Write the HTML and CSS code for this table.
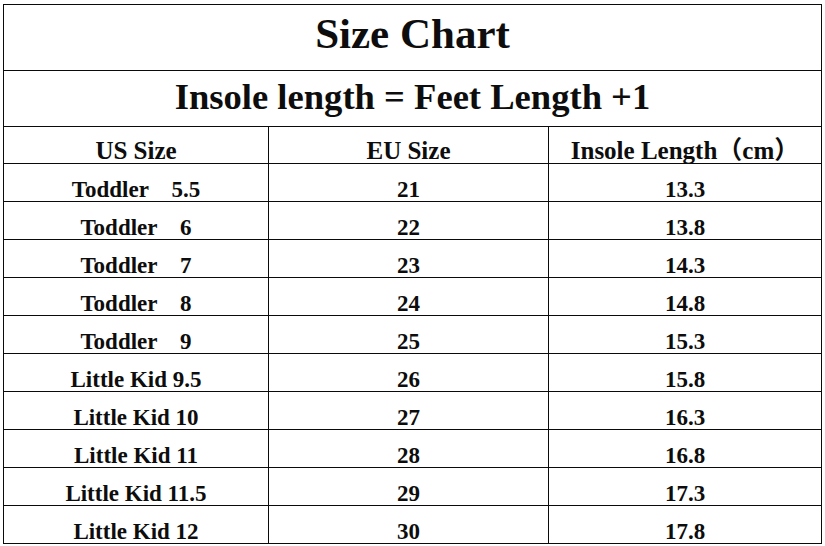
FILE: index.html
```html
<!DOCTYPE html>
<html>
<head>
<meta charset="utf-8">
<link rel="stylesheet" href="styles.css">
</head>
<body>
<div class="page">
  <div class="chart">
    <div class="cell span title">Size Chart</div>
    <div class="cell span formula">Insole length = Feet Length +1</div>
    <div class="cell head">US Size</div>
    <div class="cell head">EU Size</div>
    <div class="cell head">Insole Length（cm）</div>

    <div class="cell">Toddler    5.5</div><div class="cell">21</div><div class="cell">13.3</div>
    <div class="cell">Toddler    6</div><div class="cell">22</div><div class="cell">13.8</div>
    <div class="cell">Toddler    7</div><div class="cell">23</div><div class="cell">14.3</div>
    <div class="cell">Toddler    8</div><div class="cell">24</div><div class="cell">14.8</div>
    <div class="cell">Toddler    9</div><div class="cell">25</div><div class="cell">15.3</div>
    <div class="cell">Little Kid 9.5</div><div class="cell">26</div><div class="cell">15.8</div>
    <div class="cell">Little Kid 10</div><div class="cell">27</div><div class="cell">16.3</div>
    <div class="cell">Little Kid 11</div><div class="cell">28</div><div class="cell">16.8</div>
    <div class="cell">Little Kid 11.5</div><div class="cell">29</div><div class="cell">17.3</div>
    <div class="cell">Little Kid 12</div><div class="cell">30</div><div class="cell">17.8</div>
  </div>
</div>
</body>
</html>
```

FILE: styles.css
```css
html, body {
  margin: 0;
  padding: 0;
  background: #fff;
}

.page {
  padding: 4px 0 0 3px;
  height: 546px;
  box-sizing: border-box;
  overflow: hidden;
}

.chart {
  display: grid;
  grid-template-columns: 264px 279px 272px;
  grid-template-rows: 65px 55px 36px repeat(10, 37px);
  gap: 1px;
  padding: 1px;
  background: #0a0a0a;
  width: max-content;
  font-family: "Liberation Serif", "Noto Sans CJK SC", serif;
  font-weight: bold;
  color: #0d0d0d;
}

.cell {
  background: #fff;
  display: flex;
  align-items: flex-end;
  justify-content: center;
  font-size: 23px;
  line-height: 1;
  white-space: pre;
}

.span {
  grid-column: 1 / -1;
  align-items: center;
}

.title {
  font-size: 43px;
  padding-bottom: 8px;
  box-sizing: border-box;
}

.formula {
  font-size: 36.6px;
  padding-bottom: 2px;
  box-sizing: border-box;
}

.head {
  font-size: 25px;
  line-height: 1;
}
```
